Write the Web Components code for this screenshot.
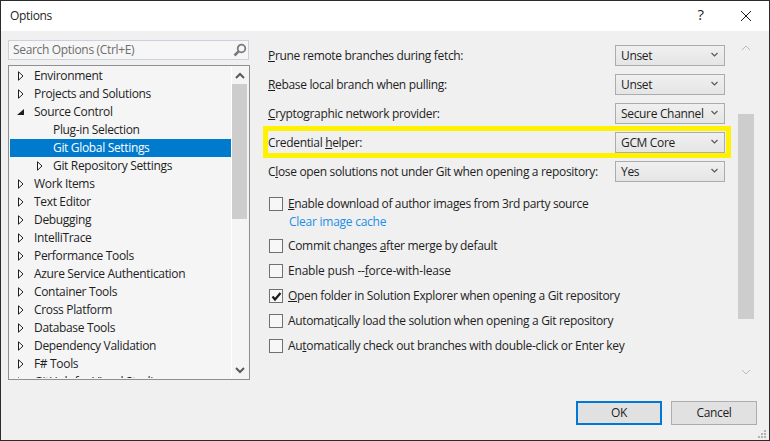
<!DOCTYPE html>
<html>
<head>
<meta charset="utf-8">
<title>Options</title>
<style>
    html, body { margin: 0; padding: 0; background: #f0f0f0; }
    body { width: 770px; height: 441px; overflow: hidden; font: 12px/16px "Open Sans", sans-serif; letter-spacing: -0.33px; color: #1e1e1e; }
    u { text-underline-offset: 1px; }
</style>
</head>
<body>
<opt-window>
    <span slot="title">Options</span>
    <opt-search slot="left">Search Options (Ctrl+E)</opt-search>
    <opt-tree slot="left">
        <tree-row state="closed">Environment</tree-row>
        <tree-row state="closed">Projects and Solutions</tree-row>
        <tree-row state="open">Source Control</tree-row>
        <tree-row level="1">Plug-in Selection</tree-row>
        <tree-row level="1" selected>Git Global Settings</tree-row>
        <tree-row level="1" state="closed">Git Repository Settings</tree-row>
        <tree-row state="closed">Work Items</tree-row>
        <tree-row state="closed">Text Editor</tree-row>
        <tree-row state="closed">Debugging</tree-row>
        <tree-row state="closed">IntelliTrace</tree-row>
        <tree-row state="closed">Performance Tools</tree-row>
        <tree-row state="closed">Azure Service Authentication</tree-row>
        <tree-row state="closed">Container Tools</tree-row>
        <tree-row state="closed">Cross Platform</tree-row>
        <tree-row state="closed">Database Tools</tree-row>
        <tree-row state="closed">Dependency Validation</tree-row>
        <tree-row state="closed">F# Tools</tree-row>
        <tree-row state="closed">GitHub for Visual Studio</tree-row>
    </opt-tree>

    <opt-combo value="Unset"><u>P</u>rune remote branches during fetch:</opt-combo>
    <opt-combo value="Unset"><u>R</u>ebase local branch when pulling:</opt-combo>
    <opt-combo value="Secure Channel"><u>C</u>ryptographic network provider:</opt-combo>
    <opt-combo value="GCM Core" highlight>Credential <u>h</u>elper:</opt-combo>
    <opt-combo value="Yes">C<u>l</u>ose open solutions not under Git when opening a repository:</opt-combo>

    <opt-check slot="checks" link="Clear image cache" style="letter-spacing:-0.37px"><u>E</u>nable download of author images from 3rd party source</opt-check>
    <opt-check slot="checks">Commit changes <u>a</u>fter merge by default</opt-check>
    <opt-check slot="checks" style="letter-spacing:-0.2px">Enable push --<u>f</u>orce-with-lease</opt-check>
    <opt-check slot="checks" checked><u>O</u>pen folder in Solution Explorer when opening a Git repository</opt-check>
    <opt-check slot="checks">Automat<u>i</u>cally load the solution when opening a Git repository</opt-check>
    <opt-check slot="checks" style="letter-spacing:-0.3px">Au<u>t</u>omatically check out branches with double-click or Enter key</opt-check>

    <opt-button slot="buttons" primary>OK</opt-button>
    <opt-button slot="buttons">Cancel</opt-button>
</opt-window>

<script>
class OptWindow extends HTMLElement {
    constructor() {
        super();
        this.attachShadow({ mode: 'open' });
        this.shadowRoot.innerHTML = `
        <style>
            :host {
                display: flex;
                flex-direction: column;
                box-sizing: border-box;
                width: 770px;
                height: 441px;
                border: 1px solid #2b2b2b;
                background: #f0f0f0;
            }
            .titlebar {
                display: flex;
                align-items: center;
                height: 30px;
                background: #fff;
                padding-left: 9px;
                flex: none;
            }
            .title { flex: 1; margin-top: -1px; }
            .help { width: 46px; text-align: center; font-size: 15px; padding-left: 1px; box-sizing: border-box; margin-top: -4px; }
            .close { width: 46px; height: 30px; display: flex; align-items: center; justify-content: center; }
            .main { display: flex; flex: 1; min-height: 0; }
            .left {
                width: 242px;
                margin-left: 7px;
                padding-top: 9px;
                display: flex;
                flex-direction: column;
                gap: 5px;
                flex: none;
            }
            .pane {
                flex: none;
                width: 457px;
                margin-left: 18px;
                padding-top: 14px;
            }
            .combos { display: flex; flex-direction: column; gap: 8px; }
            .checks { display: flex; flex-direction: column; gap: 11px; margin-top: 15px; }
            .bar { margin-left: 13px; margin-top: 8px; }
            .footer {
                position: relative;
                display: flex;
                justify-content: flex-end;
                gap: 9px;
                height: 39px;
                padding-right: 12px;
                flex: none;
            }
            .grip { position: absolute; right: 2px; bottom: 1px; }
        </style>
        <div class="titlebar">
            <span class="title"><slot name="title"></slot></span>
            <span class="help">?</span>
            <span class="close">
                <svg width="12" height="12" viewBox="0 0 12 12"><path d="M1 1 11 11M11 1 1 11" stroke="#1a1a1a" stroke-width="1" fill="none"/></svg>
            </span>
        </div>
        <div class="main">
            <div class="left"><slot name="left"></slot></div>
            <div class="pane">
                <div class="combos"><slot></slot></div>
                <div class="checks"><slot name="checks"></slot></div>
            </div>
            <opt-scrollbar class="bar" thumb-top="75" thumb-height="205" height="342" width="17" faint></opt-scrollbar>
        </div>
        <div class="footer">
            <slot name="buttons"></slot>
            <svg class="grip" width="10" height="10" viewBox="0 0 10 10" fill="#b4b4b4">
                <rect x="7" y="1" width="2" height="2"/><rect x="4" y="4" width="2" height="2"/><rect x="7" y="4" width="2" height="2"/>
                <rect x="1" y="7" width="2" height="2"/><rect x="4" y="7" width="2" height="2"/><rect x="7" y="7" width="2" height="2"/>
            </svg>
        </div>
        `;
    }
}

class OptSearch extends HTMLElement {
    constructor() {
        super();
        this.attachShadow({ mode: 'open' });
        this.shadowRoot.innerHTML = `
        <style>
            :host {
                display: flex;
                align-items: center;
                box-sizing: border-box;
                height: 20px;
                width: 241px;
                background: #f6f6f6;
                border: 1px solid #ccd0dc;
                padding: 0 1px 0 4px;
                color: #6d6d6d;
            }
            .t { flex: 1; }
        </style>
        <span class="t"><slot></slot></span>
        <svg width="14" height="14" viewBox="0 0 14 14">
            <circle cx="8.5" cy="5.5" r="3.8" fill="none" stroke="#7a7a7a" stroke-width="1.8"/>
            <path d="M5.6 8.4 1.5 12.5" stroke="#7a7a7a" stroke-width="2.6" fill="none"/>
        </svg>
        `;
    }
}

class OptTree extends HTMLElement {
    constructor() {
        super();
        this.attachShadow({ mode: 'open' });
        this.shadowRoot.innerHTML = `
        <style>
            :host {
                display: flex;
                box-sizing: border-box;
                height: 315px;
                border: 1px solid #8e8f94;
                background: #f5f5f5;
            }
            .list {
                width: 222px;
                margin-left: 1px;
                padding-top: 1px;
                border-right: 1px solid #fff;
                overflow: hidden;
                height: 312px;
                box-sizing: border-box;
                flex: none;
            }
        </style>
        <div class="list"><slot></slot></div>
        <opt-scrollbar thumb-top="18" thumb-height="135" height="313" width="16"></opt-scrollbar>
        `;
    }
}

class TreeRow extends HTMLElement {
    constructor() {
        super();
        this.attachShadow({ mode: 'open' });
        const level = Number(this.getAttribute('level') || 0);
        const state = this.getAttribute('state');
        let arrow = '';
        if (state === 'closed') {
            arrow = '<svg width="6" height="10" viewBox="0 0 6 10"><path d="M.5.8 5 5 .5 9.2Z" fill="#fff" stroke="#1e1e1e"/></svg>';
        } else if (state === 'open') {
            arrow = '<svg width="7" height="6" viewBox="0 0 7 6"><path d="M7 0V6H0Z" fill="#1e1e1e"/></svg>';
        }
        this.shadowRoot.innerHTML = `
        <style>
            :host {
                display: flex;
                align-items: center;
                height: 18px;
                padding-left: ${level * 19}px;
            }
            :host([selected]) { background: #007acc; color: #fff; }
            .arrow { width: 24px; display: flex; justify-content: center; flex: none; }
            svg { display: block; margin-left: -3px; }
        </style>
        <span class="arrow">${arrow}</span><span><slot></slot></span>
        `;
    }
}

class OptScrollbar extends HTMLElement {
    constructor() {
        super();
        this.attachShadow({ mode: 'open' });
        const top = this.getAttribute('thumb-top');
        const h = this.getAttribute('thumb-height');
        const faint = this.hasAttribute('faint');
        const stroke = faint ? '#b9b9b9' : '#5a5a5a';
        const weight = faint ? 1 : 2;
        this.shadowRoot.innerHTML = `
        <style>
            :host {
                display: block;
                position: relative;
                flex: none;
                width: ${this.getAttribute('width')}px;
                height: ${this.getAttribute('height')}px;
            }
            .thumb {
                position: absolute;
                left: 0;
                right: 1px;
                top: ${top}px;
                height: ${h}px;
                background: #cdcdcd;
            }
            svg { position: absolute; left: 3px; }
            .up { top: ${faint ? 5 : 6}px; }
            .down { bottom: 5px; }
        </style>
        <svg class="up" width="10" height="8" viewBox="0 0 10 8"><path d="M1 6 5 2 9 6" fill="none" stroke="${stroke}" stroke-width="${weight}"/></svg>
        <div class="thumb"></div>
        <svg class="down" width="10" height="8" viewBox="0 0 10 8"><path d="M1 2 5 6 9 2" fill="none" stroke="${stroke}" stroke-width="${weight}"/></svg>
        `;
    }
}

class OptCombo extends HTMLElement {
    constructor() {
        super();
        this.attachShadow({ mode: 'open' });
        this.shadowRoot.innerHTML = `
        <style>
            :host {
                display: flex;
                align-items: center;
                position: relative;
                height: 21px;
            }
            .label { flex: 1; }
            .box {
                display: flex;
                align-items: center;
                justify-content: space-between;
                box-sizing: border-box;
                width: 110px;
                height: 21px;
                padding: 0 6px 0 5px;
                border: 1px solid #acacac;
                background: linear-gradient(#f0f0f0, #e5e5e5);
            }
            .box svg { margin-top: -2px; }
            .mark {
                display: none;
                position: absolute;
                left: -5px;
                right: -6px;
                top: -6px;
                bottom: -5px;
                border: 5px solid #fff200;
                pointer-events: none;
            }
            :host([highlight]) .mark { display: block; }
        </style>
        <span class="label"><slot></slot></span>
        <span class="box">
            <span>${this.getAttribute('value')}</span>
            <svg width="7" height="5" viewBox="0 0 7 5"><path d="M.5 1 3.5 4 6.5 1" fill="none" stroke="#5a5a5a" stroke-width="1.2"/></svg>
        </span>
        <div class="mark"></div>
        `;
    }
}

class OptCheck extends HTMLElement {
    constructor() {
        super();
        this.attachShadow({ mode: 'open' });
        const link = this.getAttribute('link');
        const tick = this.hasAttribute('checked')
            ? '<svg width="11" height="11" viewBox="0 0 11 11"><path d="M1.5 5.5 4 8.5 9.5 2" fill="none" stroke="#1a1a1a" stroke-width="2.2"/></svg>'
            : '';
        this.shadowRoot.innerHTML = `
        <style>
            :host { display: block; padding-left: 1px; }
            .row { display: flex; align-items: center; height: 14px; gap: 5px; }
            .box {
                display: flex;
                align-items: center;
                justify-content: center;
                box-sizing: border-box;
                width: 14px;
                height: 14px;
                border: 1px solid #707070;
                background: #f7f7f7;
                flex: none;
            }
            .link { color: #1a8fe8; margin: 3px 0 0 20px; height: 14px; letter-spacing: -0.25px; }
        </style>
        <div class="row"><span class="box">${tick}</span><span><slot></slot></span></div>
        ${link ? `<div class="link">${link}</div>` : ''}
        `;
    }
}

class OptButton extends HTMLElement {
    constructor() {
        super();
        this.attachShadow({ mode: 'open' });
        this.shadowRoot.innerHTML = `
        <style>
            :host {
                display: flex;
                align-items: center;
                justify-content: center;
                box-sizing: border-box;
                width: 86px;
                height: 24px;
                background: #e1e1e1;
                border: 1px solid #adadad;
            }
            :host([primary]) { border: 2px solid #0078d7; }
        </style>
        <slot></slot>
        `;
    }
}

customElements.define('opt-scrollbar', OptScrollbar);
customElements.define('opt-window', OptWindow);
customElements.define('opt-search', OptSearch);
customElements.define('opt-tree', OptTree);
customElements.define('tree-row', TreeRow);
customElements.define('opt-combo', OptCombo);
customElements.define('opt-check', OptCheck);
customElements.define('opt-button', OptButton);
</script>
</body>
</html>
